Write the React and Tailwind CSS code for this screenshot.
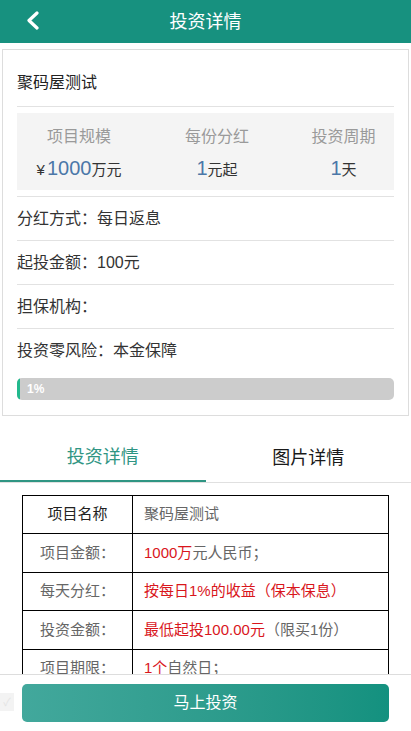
import React from 'react';

const FONT = { fontFamily: '"Liberation Sans", "Noto Sans CJK SC", sans-serif' };

const stats = [
  { label: '项目规模', prefix: '¥', num: '1000', unit: '万元' },
  { label: '每份分红', prefix: '', num: '1', unit: '元起' },
  { label: '投资周期', prefix: '', num: '1', unit: '天' },
];

const infoRows = ['分红方式：每日返息', '起投金额：100元', '担保机构：'];

const tableRows = [
  { label: '项目金额：', red: '1000万', rest: '元人民币；' },
  { label: '每天分红：', red: '按每日1%的收益（保本保息）', rest: '' },
  { label: '投资金额：', red: '最低起投100.00元', rest: '（限买1份）' },
  { label: '项目期限：', red: '1个', rest: '自然日；' },
  { label: '还款方式：', red: '', rest: '每日返息，到期还本' },
  { label: '担保机构：', red: '', rest: '' },
];

const App = () => {
  return (
    <div className="min-h-screen bg-white pb-[70px]" style={FONT}>
      {/* Header */}
      <div className="relative h-[43px] bg-[#17917f] flex items-center justify-center">
        <svg className="absolute left-[24px] top-[11px]" width="18" height="20" viewBox="0 0 18 20">
          <polyline points="13,2 5,9.5 13,17" fill="none" stroke="white" strokeWidth="3.2" strokeLinecap="round" strokeLinejoin="round" />
        </svg>
        <h1 className="text-white text-[18px] leading-none">投资详情</h1>
      </div>

      {/* Project card */}
      <div className="mx-[2px] mt-[6px] border border-[#dddddd] px-[14px] pb-[15px]">
        <div className="pt-[22px] pb-[12px] border-b border-[#e2e2e2]">
          <p className="text-[16px] leading-[22px] text-[#222]">聚码屋测试</p>
        </div>

        <div className="mt-[6px] h-[77px] bg-[#f4f4f4] grid grid-cols-[124px_152px_1fr]">
          {stats.map((s) => (
            <div key={s.label} className="flex flex-col items-center">
              <span className="mt-[14px] text-[16px] leading-[20px] text-[#9a9a9a]">{s.label}</span>
              <span className="mt-[10px] flex items-baseline leading-[22px]">
                {s.prefix && <span className="text-[15px] text-[#333] mr-[2px]">{s.prefix}</span>}
                <span className="text-[20px] text-[#4b77a8]">{s.num}</span>
                <span className="text-[15px] text-[#333]">{s.unit}</span>
              </span>
            </div>
          ))}
        </div>

        <div className="mt-[6px] border-t border-[#e2e2e2]">
          {infoRows.map((r) => (
            <div key={r} className="h-[44px] flex items-center border-b border-[#e2e2e2] text-[16px] text-[#333]">
              {r}
            </div>
          ))}
          <div className="h-[44px] flex items-center text-[16px] text-[#333]">投资零风险：本金保障</div>
        </div>

        <div className="mt-[5px] h-[22px] rounded-[5px] bg-[#cccccc] relative overflow-hidden flex items-center">
          <div className="absolute left-0 top-0 bottom-0 w-[3px] bg-[#22b98d]" />
          <span className="ml-[10px] text-[12px] font-bold text-white">1%</span>
        </div>
      </div>

      {/* Tabs */}
      <div className="mt-[18px] grid grid-cols-2 border-b border-[#e0e0e0]">
        <div className="h-[48px] flex items-center justify-center border-b-2 border-[#2f9583] -mb-px">
          <span className="text-[18px] text-[#2f9583]">投资详情</span>
        </div>
        <div className="h-[48px] flex items-center justify-center">
          <span className="text-[18px] text-[#1a1a1a]">图片详情</span>
        </div>
      </div>

      {/* Detail table */}
      <div className="mx-[22px] mt-[12px] border border-black">
        <div className="grid grid-cols-[110px_1fr] h-[38px] border-b border-black text-[15px]">
          <div className="flex items-center justify-center border-r border-black text-[#222]">项目名称</div>
          <div className="flex items-center pl-[11px] text-[#666]">聚码屋测试</div>
        </div>
        {tableRows.map((r) => (
          <div key={r.label} className="grid grid-cols-[110px_1fr] h-[38.5px] border-b border-black text-[15px]">
            <div className="flex items-center justify-center border-r border-black text-[#666]">{r.label}</div>
            <div className="flex items-center pl-[11px] text-[#666]">
              <span className="text-[#d9161c]">{r.red}</span>
              <span>{r.rest}</span>
            </div>
          </div>
        ))}
      </div>

      {/* Bottom bar */}
      <div className="fixed bottom-0 left-0 right-0 h-[57px] bg-white border-t border-[#dddddd]">
        <div className="absolute left-0 top-[18px] w-[14px] h-[18px] bg-[#f3f3f3] text-[#e4e4e4] text-[11px] flex items-center justify-center">✓</div>
        <button className="mx-[22px] mt-[9px] w-[367px] h-[38px] rounded-[5px] bg-gradient-to-r from-[#42a89c] to-[#13917f] text-white text-[16px]">
          马上投资
        </button>
      </div>
    </div>
  );
};

export default App;
